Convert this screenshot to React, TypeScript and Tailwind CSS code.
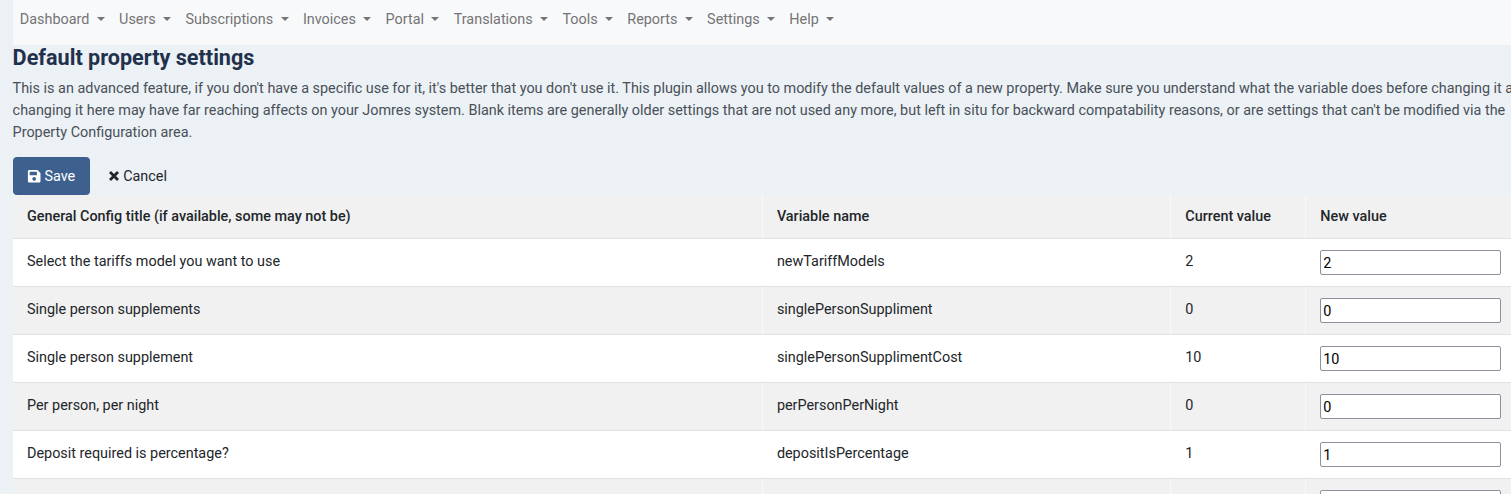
import { FaSave } from 'react-icons/fa';

const menu = ['Dashboard', 'Users', 'Subscriptions', 'Invoices', 'Portal', 'Translations', 'Tools', 'Reports', 'Settings', 'Help'];

const rows = [
  { title: 'Select the tariffs model you want to use', name: 'newTariffModels', value: '2' },
  { title: 'Single person supplements', name: 'singlePersonSuppliment', value: '0' },
  { title: 'Single person supplement', name: 'singlePersonSupplimentCost', value: '10' },
  { title: 'Per person, per night', name: 'perPersonPerNight', value: '0' },
  { title: 'Deposit required is percentage?', name: 'depositIsPercentage', value: '1' },
  { title: '', name: '', value: '' },
];

const columns = 'grid grid-cols-[749.4px_408.4px_135px_220px]';
const cell = 'pl-[13.9px] border-l border-white/60 first:border-l-0 first:pl-[14.4px]';

function NavItem({ label }: { label: string }) {
  return (
    <a href="#" className="flex items-center px-[7.2px] whitespace-nowrap">
      {label}
      <span className="mb-[2px] ml-[7.3px] border-x-[4.3px] border-t-[4.3px] border-x-transparent border-t-current" />
    </a>
  );
}

function CrossIcon() {
  return (
    <svg viewBox="0 0 10 10" className="mb-[2px] size-[10px]" stroke="currentColor" strokeWidth="2.8" fill="none">
      <path d="M1 1L9 9M9 1L1 9" />
    </svg>
  );
}

export default function App() {
  return (
    <div className="h-[494px] overflow-hidden bg-[#ecf1f6] pl-[12.6px] font-['Roboto',sans-serif] text-[14.4px] leading-[22px] text-[#22262a]">
      <div className="w-[1514px]">
        <nav className="flex h-[45px] items-start bg-[#f8f9fb] pt-[9px] text-[#747474]">
          {menu.map((m) => <NavItem key={m} label={m} />)}
        </nav>
        <h1 className="h-[33px] text-[21.6px] leading-[26px] font-bold text-[#1f314b]">Default property settings</h1>
        <p className="h-[79px] whitespace-nowrap text-[#495057]">
          This is an advanced feature, if you don't have a specific use for it, it's better that you don't use it. This plugin allows you to modify the default values of a new property. Make sure you understand what the variable does before changing it as<br />
          changing it here may have far reaching affects on your Jomres system. Blank items are generally older settings that are not used any more, but left in situ for backward compatability reasons, or are settings that can't be modified via the<br />
          Property Configuration area.
        </p>
        <div className="flex h-[38px]">
          <button className="flex h-[38px] w-[77.8px] items-center rounded-[3.6px] border border-[#3a5f8f] bg-[#3d608f] pt-[2px] pl-[13.6px] text-white">
            <FaSave className="mb-[2px] size-[14.4px]" /><span className="ml-[2.8px]">Save</span>
          </button>
          <button className="ml-[18.6px] flex items-center gap-[4.2px] pt-[2px]">
            <CrossIcon />Cancel
          </button>
        </div>
        <div>
          <div className={`${columns} h-11 border-b border-[#dee2e8] bg-[#f1f1f1] font-medium`}>
            {['General Config title (if available, some may not be)', 'Variable name', 'Current value', 'New value'].map((h) => (
              <div key={h} className={`${cell} pt-[11px]`}>{h}</div>
            ))}
          </div>
          {rows.map((r, i) => (
            <div key={i} className={`${columns} h-12 border-b border-[#dee2e8] ${i % 2 ? 'bg-[#f1f1f1]' : 'bg-white'}`}>
              <div className={`${cell} pt-3`}>{r.title}</div>
              <div className={`${cell} pt-3`}>{r.name}</div>
              <div className={`${cell} pt-3`}>{r.value}</div>
              <div className={`${cell} pt-[11px]`}>
                <input defaultValue={r.value} className="block h-[25px] w-[181px] rounded-[2px] border border-[#8f8f9d] bg-white px-[2px] pt-[2px] text-black outline-none" />
              </div>
            </div>
          ))}
        </div>
      </div>
    </div>
  );
}
